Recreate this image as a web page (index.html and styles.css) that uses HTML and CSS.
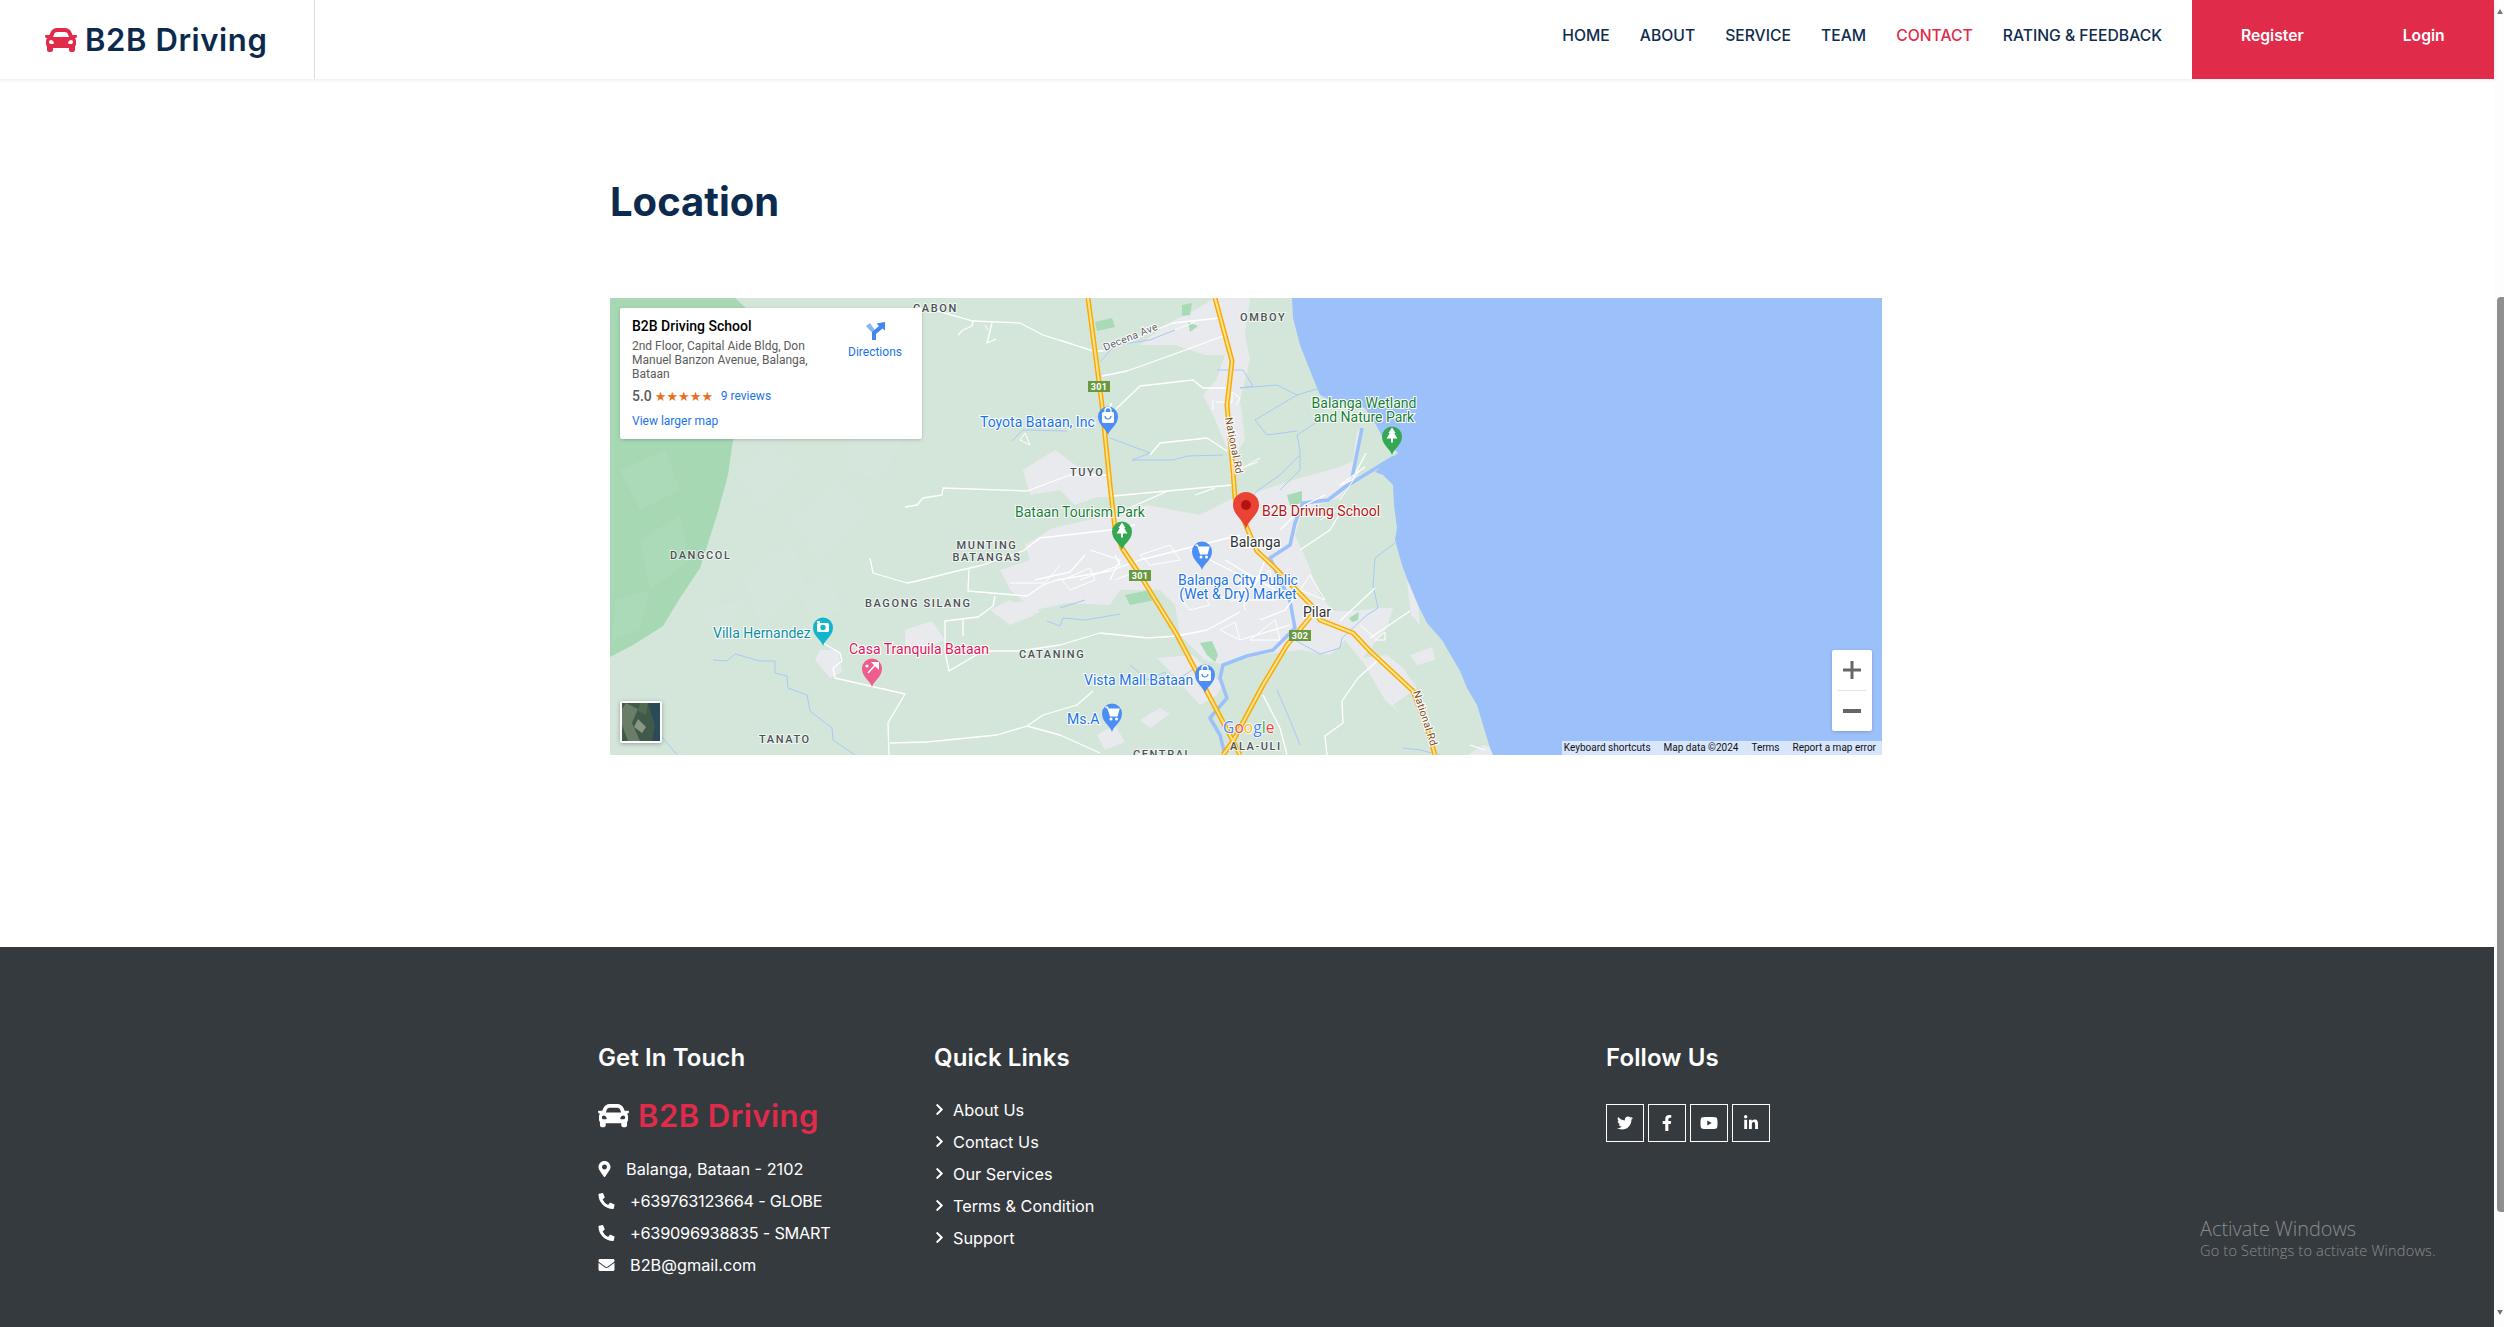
FILE: index.html
```html
<!DOCTYPE html>
<html lang="en">
<head>
<meta charset="utf-8">
<title>B2B Driving - Contact</title>
<link rel="stylesheet" href="styles.css">
</head>
<body>
<svg class="defs" width="0" height="0" aria-hidden="true">
  <defs>
    <symbol id="i-car" viewBox="0 0 512 512"><path d="M499.99 176h-59.87l-16.64-41.6C406.38 91.63 365.57 64 319.5 64h-127c-46.06 0-86.88 27.63-103.99 70.4L71.87 176H12.01C4.2 176-1.53 183.34.37 190.91l6 24C7.7 220.25 12.5 224 18.01 224h20.07C24.65 235.73 16 252.78 16 272v48c0 16.12 6.16 30.67 16 41.93V416c0 17.67 14.33 32 32 32h32c17.67 0 32-14.33 32-32v-32h256v32c0 17.67 14.33 32 32 32h32c17.67 0 32-14.33 32-32v-54.07c9.84-11.25 16-25.8 16-41.93v-48c0-19.22-8.65-36.27-22.07-48H494c5.51 0 10.31-3.75 11.64-9.09l6-24c1.89-7.57-3.84-14.91-11.65-14.91zm-352.06-17.83c7.29-18.22 24.94-30.17 44.57-30.17h127c19.63 0 37.28 11.95 44.57 30.17L384 208H128l19.93-49.83zM96 319.8c-19.2 0-32-12.76-32-31.9S76.8 256 96 256s48 28.71 48 47.85-28.8 15.95-48 15.95zm320 0c-19.2 0-48 3.19-48-15.95S396.8 256 416 256s32 12.76 32 31.9-12.8 31.9-32 31.9z"/></symbol>
    <symbol id="i-marker" viewBox="0 0 384 512"><path d="M172.268 501.67C26.97 291.031 0 269.413 0 192 0 85.961 85.961 0 192 0s192 85.961 192 192c0 77.413-26.97 99.031-172.268 309.67-9.535 13.774-29.93 13.773-39.464 0zM192 272c44.183 0 80-35.817 80-80s-35.817-80-80-80-80 35.817-80 80 35.817 80 80 80z"/></symbol>
    <symbol id="i-phone" viewBox="0 0 512 512"><path d="M497.39 361.8l-112-48a24 24 0 0 0-28 6.9l-49.6 60.6A370.66 370.66 0 0 1 130.6 204.11l60.6-49.6a23.94 23.94 0 0 0 6.9-28l-48-112A24.16 24.16 0 0 0 122.6.61l-104 24A24 24 0 0 0 0 48c0 256.5 207.9 464 464 464a24 24 0 0 0 23.4-18.6l24-104a24.29 24.29 0 0 0-14.01-27.6z"/></symbol>
    <symbol id="i-mail" viewBox="0 0 512 512"><path d="M502.3 190.8c3.9-3.1 9.7-.2 9.7 4.7V400c0 26.5-21.5 48-48 48H48c-26.5 0-48-21.5-48-48V195.6c0-5 5.7-7.8 9.7-4.7 22.4 17.4 52.1 39.5 154.1 113.6 21.1 15.4 56.7 47.8 92.2 47.6 35.7.3 72-32.8 92.3-47.6 102-74.1 131.6-96.3 154-113.7zM256 320c23.2.4 56.6-29.2 73.4-41.4 132.7-96.3 142.8-104.7 173.4-128.7 5.8-4.5 9.2-11.5 9.2-18.9v-19c0-26.5-21.5-48-48-48H48C21.5 64 0 85.5 0 112v19c0 7.4 3.4 14.3 9.2 18.9 30.6 23.9 40.7 32.4 173.4 128.7 16.8 12.2 50.2 41.8 73.4 41.4z"/></symbol>
    <symbol id="i-chev" viewBox="0 0 320 512"><path d="M285.476 272.971L91.132 467.314c-9.373 9.373-24.569 9.373-33.941 0l-22.667-22.667c-9.357-9.357-9.375-24.522-.04-33.901L188.505 256 34.484 101.255c-9.335-9.379-9.317-24.544.04-33.901l22.667-22.667c9.373-9.373 24.569-9.373 33.941 0L285.475 239.03c9.373 9.372 9.373 24.568.001 33.941z"/></symbol>
    <symbol id="i-tw" viewBox="0 0 512 512"><path d="M459.37 151.716c.325 4.548.325 9.097.325 13.645 0 138.72-105.583 298.558-298.558 298.558-59.452 0-114.68-17.219-161.137-47.106 8.447.974 16.568 1.299 25.34 1.299 49.055 0 94.213-16.568 130.274-44.832-46.132-.975-84.792-31.188-98.112-72.772 6.498.974 12.995 1.624 19.818 1.624 9.421 0 18.843-1.3 27.614-3.573-48.081-9.747-84.143-51.98-84.143-102.985v-1.299c13.969 7.797 30.214 12.67 47.431 13.319-28.264-18.843-46.781-51.005-46.781-87.391 0-19.492 5.197-37.36 14.294-52.954 51.655 63.675 129.3 105.258 216.365 109.807-1.624-7.797-2.599-15.918-2.599-24.04 0-57.828 46.782-104.934 104.934-104.934 30.213 0 57.502 12.67 76.67 33.137 23.715-4.548 46.456-13.32 66.599-25.34-7.798 24.366-24.366 44.833-46.132 57.827 21.117-2.273 41.584-8.122 60.426-16.243-14.292 20.791-32.161 39.308-52.628 54.253z"/></symbol>
    <symbol id="i-fb" viewBox="0 0 320 512"><path d="M279.14 288l14.22-92.66h-88.91v-60.13c0-25.35 12.42-50.06 52.24-50.06h40.42V6.26S260.43 0 225.36 0c-73.22 0-121.08 44.38-121.08 124.72v70.62H22.89V288h81.39v224h100.17V288z"/></symbol>
    <symbol id="i-yt" viewBox="0 0 576 512"><path d="M549.655 124.083c-6.281-23.65-24.787-42.276-48.284-48.597C458.781 64 288 64 288 64S117.22 64 74.629 75.486c-23.497 6.322-42.003 24.947-48.284 48.597-11.412 42.867-11.412 132.305-11.412 132.305s0 89.438 11.412 132.305c6.281 23.65 24.787 41.5 48.284 47.821C117.22 448 288 448 288 448s170.78 0 213.371-11.486c23.497-6.321 42.003-24.171 48.284-47.821 11.412-42.867 11.412-132.305 11.412-132.305s0-89.438-11.412-132.305zm-317.51 213.508V175.185l142.739 81.205-142.739 81.201z"/></symbol>
    <symbol id="i-in" viewBox="0 0 448 512"><path d="M100.28 448H7.4V148.9h92.88zM53.79 108.1C24.09 108.1 0 83.5 0 53.8a53.79 53.79 0 0 1 107.58 0c0 29.7-24.1 54.3-53.79 54.3zM447.9 448h-92.68V302.4c0-34.7-.7-79.2-48.29-79.2-48.29 0-55.69 37.7-55.69 76.7V448h-92.78V148.9h89.08v40.8h1.3c12.4-23.5 42.69-48.3 87.88-48.3 94 0 111.28 61.9 111.28 142.3V448z"/></symbol>
    <path id="pin" d="M0 0C-1.6-6-10-10-10-18.500A10 10 0 1 1 10-18.500C10-10 1.600-6 0 0Z"/>
    <path id="g-tree" fill="#fff" d="M0-27.500L-3.600-22H-2.200L-5.400-16.500H-1V-12.500H1V-16.500H5.400L2.200-22H3.600Z"/>
    <g id="g-bag"><rect x="-6" y="-23" width="12" height="11" rx="1.500" fill="#fff"/><path d="M-3-23V-24.500A3 3 0 0 1 3-24.500V-23" fill="none" stroke="#fff" stroke-width="1.300"/><path d="M-3-19A3 3 0 0 0 3-19" fill="none" stroke="#4b8ef5" stroke-width="1.200"/></g>
    <g id="g-cart"><path d="M-7-25H-4.500L-1.500-16H5L7-23H-3.500" fill="#fff" stroke="#fff" stroke-width="1.200"/><circle cx="-1" cy="-13" r="1.500" fill="#fff"/><circle cx="4.500" cy="-13" r="1.500" fill="#fff"/></g>
  </defs>
</svg>

<div class="page">
  <header class="topbar">
    <a class="brand" href="#"><svg class="brand-icon"><use href="#i-car"/></svg><span>B2B Driving</span></a>
    <nav class="nav">
      <a href="#">HOME</a>
      <a href="#">ABOUT</a>
      <a href="#">SERVICE</a>
      <a href="#">TEAM</a>
      <a class="active" href="#">CONTACT</a>
      <a href="#">RATING &amp; FEEDBACK</a>
    </nav>
    <div class="auth">
      <a href="#">Register</a>
      <a class="auth-login" href="#">Login</a>
    </div>
  </header>

  <main class="content">
    <h1 class="title">Location</h1>
    <div class="map">
      <svg class="map-canvas" viewBox="610 298 1272 457" width="1272" height="457">
        <rect class="land" x="610" y="298" width="1272" height="457"/>
        <path class="forest" d="M610 298H735L770 330L733 440L728 475L717 515L700 568L680 598L663 626L633 645L610 657Z"/>
        <g class="terrain">
          <path d="M735 470L770 445L800 470L760 510Z"/><path d="M790 520L840 480L870 510L820 560Z"/><path d="M745 580L790 540L805 580L760 625Z"/><path d="M850 440L905 435L880 480L845 470Z"/><path d="M700 610L745 600L725 640Z"/><path d="M800 590L830 570L840 610L810 620Z"/>
        </g>
        <g class="terrain-dark">
          <path d="M620 470L665 450L680 490L640 510Z"/><path d="M640 540L680 515L690 560L650 590Z"/><path d="M615 600L650 590L640 630L612 640Z"/>
        </g>
        <g class="urban">
          <path d="M1023 470L1055 450L1082 470L1105 475L1115 497L1098 497L1075 505L1060 490L1030 495Z"/>
          <path d="M1140 345L1165 325L1195 310L1215 298L1250 298L1245 335L1250 360L1240 400L1245 440L1232 460L1213 415L1203 395L1216 380L1225 355L1205 355L1175 345Z"/>
          <path d="M1025 545L1053 528L1110 515L1147 505L1200 515L1233 498L1260 491L1300 478L1337 468L1353 461L1357 431L1363 428L1352 478L1340 498L1303 510L1295 535L1307 561L1320 595L1333 611L1353 611L1380 608L1393 608L1387 628L1363 658L1387 655L1403 668L1417 688L1393 705L1400 713L1385 700L1363 662L1345 640L1330 655L1300 650L1260 655L1225 665L1205 660L1180 635L1175 605L1160 590L1120 590L1110 605L1067 603L1035 610L1010 590L1000 570L1030 560Z"/>
          <path d="M1157 658L1193 655L1223 685L1217 695L1200 705L1187 691L1167 668Z"/>
          <path d="M1140 720L1160 708L1170 714L1150 728Z"/>
          <path d="M1097 735L1115 725L1125 742L1105 750Z"/>
          <path d="M905 630L932 621L945 640L920 650L905 645Z"/>
          <path d="M990 610L1010 600L1035 615L1010 625Z"/>
          <path d="M1000 605L1030 600L1040 612L1020 620Z"/>
          <path d="M820 650L838 650L842 672L830 678L815 660Z"/>
          <path d="M1410 655L1432 647L1435 660L1417 665Z"/>
          <path d="M1468 755L1483 745L1495 748L1500 755Z"/>
          <path d="M1407 582L1412 570L1418 600L1420 625L1411 615Z"/>
        </g>
        <g class="park">
          <path d="M1125 595L1150 590L1155 600L1130 605Z"/><path d="M1200 643L1212 641L1218 655L1215 662L1207 655Z"/>
          <path d="M1095 322L1112 318L1115 327L1097 331Z"/><path d="M1182 305L1192 303L1190 315L1182 316Z"/>
          <path d="M1287 495L1302 491L1302 503L1290 506Z"/><path d="M1188 322L1198 326L1190 332Z"/><path d="M1349 618L1359 612L1358 620L1352 622Z"/>
        </g>
        <path class="water" d="M1292 298L1293 318L1300 345L1313 378L1320 395L1335 402L1365 408L1375 423L1383 438L1398 453L1383 465L1375 472L1383 475L1393 485L1394 505L1397 528L1395 540L1402 565L1408 581L1418 605L1427 623L1442 640L1460 671L1467 688L1477 705L1490 748L1493 755H1882V298Z"/>
        <g class="river-thick">
          <path d="M1394 457L1345 487L1328 500L1303 503L1295 523L1290 545L1270 558L1290 601L1295 628L1273 650L1247 656L1223 665L1220 678L1227 698L1210 718L1220 735L1225 755"/>
          <path d="M1362 428L1352 478"/>
        </g>
        <g class="river">
          <path d="M1320 420L1297 435L1300 451L1300 470L1280 490"/>
          <path d="M1395 543L1375 558L1373 585L1378 608L1367 615L1342 638L1340 648L1320 654L1295 640"/>
          <path d="M1217 370H1243L1253 386L1240 388L1277 385L1297 395L1320 388"/>
          <path d="M1297 395L1255 420L1267 435L1297 431"/>
          <path d="M1300 455L1280 475L1257 491L1240 510"/>
          <path d="M1110 438L1150 453L1132 460H1173L1188 456L1223 455"/>
          <path d="M713 660L727 661L735 654L760 661H775V673L787 676L788 688L807 695L810 711L832 728L833 740L855 755"/>
          <path d="M663 738L677 755"/>
          <path d="M1012 441L1023 430L1067 431"/>
          <path d="M1047 621L1060 626L1063 618L1085 620L1120 614"/>
          <path d="M1060 608L1085 600"/>
          <path d="M1130 665L1148 680L1165 672L1170 685L1195 668"/>
          <path d="M1100 362L1115 345L1150 340L1175 330"/>
          <path d="M1277 690L1290 720L1300 745"/>
          <path d="M1403 748L1420 750L1440 755"/>
        </g>
        <g class="road">
          <path d="M938 311L973 321L1020 323L1043 335L1093 351"/>
          <path d="M973 321L972 326L963 330L958 335"/><path d="M992 323L987 343L996 339"/>
          <path d="M905 507L917 505L923 498L942 495L943 488L1027 491L1070 475L1107 475"/>
          <path d="M870 558L873 573L907 583L917 581L957 571L983 565L1023 551L1040 538L1110 530L1135 525"/>
          <path d="M969 568L968 591L1027 596L1043 585L1057 580L1110 571L1140 560L1200 545L1240 535"/>
          <path d="M995 596L993 606L978 617L945 621L945 651L949 671L983 651H1020L1060 645L1100 633L1148 638L1177 636L1207 630L1240 612"/>
          <path d="M963 620L963 636"/>
          <path d="M823 643L840 653L842 661L833 668L835 678L905 694L888 723L889 755"/>
          <path d="M890 743L927 742L997 735L1027 726L1043 715L1077 705L1093 691"/>
          <path d="M1027 726L1060 735L1100 753"/>
          <path d="M1060 340L1093 351H1103L1153 331L1173 323L1220 318"/>
          <path d="M1102 376L1127 371L1172 355L1223 336"/>
          <path d="M1113 496L1232 485"/>
          <path d="M1115 410L1140 386L1193 380L1203 388H1227"/>
          <path d="M1150 455L1160 443L1207 438L1227 451"/>
          <path d="M1375 588L1340 621"/><path d="M1410 611L1370 638"/>
          <path d="M1377 661L1358 678L1342 701L1343 723L1325 736L1327 755"/>
          <path d="M1263 695L1280 728L1287 755"/>
          <path d="M1260 620L1285 610L1300 590M1215 600L1255 585L1265 560M1225 560L1275 590M1240 640L1290 625M1190 550L1240 575L1245 610M1090 550L1120 560L1110 580M1080 580L1120 565L1115 555M1035 580L1070 572L1085 555M1300 550L1330 530L1345 505M1280 530L1305 505L1325 495"/>
          <path d="M1195 495L1215 488M1105 415L1112 403M1125 510L1170 490"/>
          <path d="M1366 453L1352 480L1340 485L1365 467"/>
          <path d="M1470 745L1485 750"/>
        </g>
        <g class="streets">
          <path d="M1216 402H1232V392M1213 410V400M1232 392L1240 398L1236 405M1230 475L1260 458M1236 470L1258 462"/>
          <path d="M1062 580L1090 568L1095 580L1070 590ZM1115 580L1135 572M1140 555L1170 545L1180 560L1150 565ZM1180 598L1200 590L1210 605L1190 610ZM1230 600L1270 570L1275 600ZM1220 630L1235 622L1240 640ZM1250 640L1275 620L1280 640ZM1310 575L1325 600L1300 590ZM1340 500L1360 470M1320 520L1345 505M1360 625L1375 638M1375 640L1385 632V640Z"/>
          <path d="M1010 583H1045L1060 565M1020 440L1025 433L1030 445ZM988 330L985 325M1175 330L1195 322"/>
        </g>
        <g class="hw-base">
          <path d="M1088 298L1095 351L1102 405L1110 485L1115 528L1122 548L1140 575L1177 635L1205 688L1233 741L1240 755"/>
          <path d="M1215 298L1232 361L1227 405L1233 471L1235 498L1247 528L1257 551L1273 566L1312 606L1320 620L1353 633L1370 651L1413 691L1427 728L1435 755"/>
          <path d="M1312 615L1287 645L1263 685L1233 741L1223 755"/>
        </g>
        <g class="hw-top">
          <path d="M1088 298L1095 351L1102 405L1110 485L1115 528L1122 548L1140 575L1177 635L1205 688L1233 741L1240 755"/>
          <path d="M1215 298L1232 361L1227 405L1233 471L1235 498L1247 528L1257 551L1273 566L1312 606L1320 620L1353 633L1370 651L1413 691L1427 728L1435 755"/>
          <path d="M1312 615L1287 645L1263 685L1233 741L1223 755"/>
        </g>
        <g class="shields">
          <rect x="1088" y="381" width="22" height="11"/><rect x="1129" y="570" width="22" height="11"/><rect x="1289" y="630" width="22" height="11"/>
        </g>
        <text class="shield-t" x="1099" y="390">301</text>
        <text class="shield-t" x="1140" y="579">301</text>
        <text class="shield-t" x="1300" y="639">302</text>

        <text class="place" x="913" y="312">CABON</text>
        <text class="place" x="1240" y="321">OMBOY</text>
        <text class="place" x="1070" y="476">TUYO</text>
        <text class="place" x="670" y="559">DANGCOL</text>
        <text class="place mid" x="987" y="549">MUNTING</text>
        <text class="place mid" x="987" y="561">BATANGAS</text>
        <text class="place" x="865" y="607">BAGONG SILANG</text>
        <text class="place" x="1019" y="658">CATANING</text>
        <text class="place" x="759" y="743">TANATO</text>
        <text class="place" x="1230" y="750">ALA-ULI</text>
        <text class="place" x="1133" y="758">CENTRAL</text>
        <text class="city" x="1230" y="547">Balanga</text>
        <text class="city" x="1303" y="617">Pilar</text>
        <text class="road-t" transform="translate(1225 418) rotate(79)">National Rd</text>
        <text class="road-t" transform="translate(1413 692) rotate(72)">National Rd</text>
        <text class="road-g" transform="translate(1105 351) rotate(-22)">Decena Ave</text>

        <text class="poi blue" x="980" y="427">Toyota Bataan, Inc</text>
        <text class="poi green" x="1015" y="517">Bataan Tourism Park</text>
        <text class="poi blue mid" x="1238" y="585">Balanga City Public</text>
        <text class="poi blue mid" x="1238" y="599">(Wet &amp; Dry) Market</text>
        <text class="poi blue" x="1084" y="685">Vista Mall Bataan</text>
        <text class="poi blue" x="1067" y="724">Ms.A</text>
        <text class="poi green mid" x="1364" y="408">Balanga Wetland</text>
        <text class="poi green mid" x="1364" y="422">and Nature Park</text>
        <text class="poi teal" x="713" y="638">Villa Hernandez</text>
        <text class="poi pink" x="849" y="654">Casa Tranquila Bataan</text>
        <text class="poi red" x="1262" y="516">B2B Driving School</text>

        <g transform="translate(1108 435)"><use href="#pin" class="p-blue"/><use href="#g-bag"/></g>
        <g transform="translate(1122 550)"><use href="#pin" class="p-green"/><use href="#g-tree"/></g>
        <g transform="translate(1392 455)"><use href="#pin" class="p-green"/><use href="#g-tree"/></g>
        <g transform="translate(1202 570)"><use href="#pin" class="p-blue"/><use href="#g-cart"/></g>
        <g transform="translate(1205 693)"><use href="#pin" class="p-blue"/><use href="#g-bag"/></g>
        <g transform="translate(1112 732)"><use href="#pin" class="p-blue"/><use href="#g-cart"/></g>
        <g transform="translate(823 646)"><use href="#pin" class="p-teal"/><rect x="-6" y="-23" width="12" height="9" rx="1.500" fill="#fff"/><rect x="-6" y="-25" width="3" height="2" fill="#fff"/><circle cy="-18.500" r="2.700" fill="#12b5cb"/></g>
        <g transform="translate(872 687)"><use href="#pin" class="p-pink"/><path d="M-4-14L5-24" stroke="#fff" stroke-width="1.600" fill="none"/><path d="M-1-25L7-25L7-17Z" fill="#fff"/><circle cx="-5" cy="-21" r="1.600" fill="#fff"/></g>
        <g transform="translate(1246 529)"><path class="p-red" d="M0 0C-2-9-13-14-13-24A13 13 0 1 1 13-24C13-14 2-9 0 0Z"/><circle class="p-red-in" cy="-24" r="5"/></g>

        <text class="google" x="1223" y="733"><tspan class="g-b">G</tspan><tspan class="g-r">o</tspan><tspan class="g-y">o</tspan><tspan class="g-b">g</tspan><tspan class="g-g">l</tspan><tspan class="g-r">e</tspan></text>
      </svg>

      <div class="infocard">
        <div class="info-main">
          <div class="info-name">B2B Driving School</div>
          <div class="info-addr">2nd Floor, Capital Aide Bldg, Don Manuel Banzon Avenue, Balanga, Bataan</div>
          <div class="info-rate"><span class="score">5.0</span><span class="stars">★★★★★</span><a href="#" class="reviews">9 reviews</a></div>
          <a href="#" class="larger">View larger map</a>
        </div>
        <a href="#" class="directions">
          <svg class="dir-icon" viewBox="0 0 19 19"><path fill="#8ab4f8" d="M0 5L4 2L9.500 10V19H6V11.500Z"/><path fill="#4285f4" d="M6 19V11L13 5L10.500 2.500L19 1V9.500L16.500 7.500L10 13V19Z"/></svg>
          <span>Directions</span>
        </a>
      </div>

      <div class="sat">
        <svg viewBox="0 0 38 38" width="38" height="38"><rect width="38" height="38" fill="#3f5a4a"/><path fill="#2b4a58" d="M26 0H38V38H30L33 22Z"/><path fill="#6b7d66" d="M4 0L16 6L10 20L18 38H6L0 22V6Z"/><path fill="#8a9686" d="M16 16L24 24L20 30L12 24Z"/><path fill="#4f6b52" d="M18 0H26L24 12L16 8Z"/></svg>
      </div>

      <div class="zoomctl">
        <button class="zbtn" aria-label="Zoom in"><svg viewBox="0 0 18 18" width="18" height="18"><path d="M7.500 0H10.500V7.500H18V10.500H10.500V18H7.500V10.500H0V7.500H7.500Z"/></svg></button>
        <span class="zsep"></span>
        <button class="zbtn" aria-label="Zoom out"><svg viewBox="0 0 18 18" width="18" height="18"><rect y="7" width="18" height="4"/></svg></button>
      </div>

      <div class="attrib">
        <span>Keyboard shortcuts</span><span>Map data ©2024</span><span>Terms</span><span>Report a map error</span>
      </div>
    </div>
  </main>

  <footer class="footer">
    <section class="fcol">
      <h4 class="fhead">Get In Touch</h4>
      <div class="fbrand"><svg class="fbrand-icon"><use href="#i-car"/></svg><span>B2B Driving</span></div>
      <p class="contact"><svg class="ci ci-pin"><use href="#i-marker"/></svg>Balanga, Bataan - 2102</p>
      <p class="contact phone"><svg class="ci"><use href="#i-phone"/></svg>+639763123664 - GLOBE</p>
      <p class="contact phone"><svg class="ci"><use href="#i-phone"/></svg>+639096938835 - SMART</p>
      <p class="contact"><svg class="ci"><use href="#i-mail"/></svg>B2B@gmail.com</p>
    </section>
    <section class="fcol">
      <h4 class="fhead fhead-links">Quick Links</h4>
      <a class="flink" href="#"><svg class="chev"><use href="#i-chev"/></svg>About Us</a>
      <a class="flink" href="#"><svg class="chev"><use href="#i-chev"/></svg>Contact Us</a>
      <a class="flink" href="#"><svg class="chev"><use href="#i-chev"/></svg>Our Services</a>
      <a class="flink" href="#"><svg class="chev"><use href="#i-chev"/></svg>Terms &amp; Condition</a>
      <a class="flink" href="#"><svg class="chev"><use href="#i-chev"/></svg>Support</a>
    </section>
    <section class="fcol">
      <h4 class="fhead fhead-follow">Follow Us</h4>
      <div class="social">
        <a href="#" aria-label="Twitter"><svg class="s-tw"><use href="#i-tw"/></svg></a>
        <a href="#" aria-label="Facebook"><svg class="s-fb"><use href="#i-fb"/></svg></a>
        <a href="#" aria-label="YouTube"><svg class="s-yt"><use href="#i-yt"/></svg></a>
        <a href="#" aria-label="LinkedIn"><svg class="s-in"><use href="#i-in"/></svg></a>
      </div>
    </section>
    <div class="activate">
      <div class="act-1">Activate Windows</div>
      <div class="act-2">Go to Settings to activate Windows.</div>
    </div>
  </footer>
</div>

<aside class="scrollbar" aria-hidden="true">
  <span class="arrow-up"></span>
  <span class="thumb"></span>
  <span class="arrow-down"></span>
</aside>
</body>
</html>
```
FILE: styles.css
```css
* { box-sizing: border-box; }
html, body { margin: 0; height: 100%; }
body {
  display: flex;
  width: 2504px;
  height: 1327px;
  overflow: hidden;
  background: #fff;
  font-family: Inter, "Liberation Sans", sans-serif;
  color: #fff;
}
a { color: inherit; text-decoration: none; }
.defs { position: absolute; }

.page { flex: 1; min-width: 0; display: flex; flex-direction: column; }

/* top bar */
.topbar {
  flex: none;
  height: 79px;
  display: flex;
  align-items: stretch;
  background: #fff;
  box-shadow: 0 1px 4px rgba(0, 0, 0, .09);
  position: relative;
  z-index: 2;
}
.brand {
  width: 315px;
  padding-left: 45px;
  border-right: 1px solid #dcdcdc;
  display: flex;
  align-items: center;
  gap: 8px;
  color: #0b2a4d;
  font-weight: 600;
  font-size: 31px;
  letter-spacing: .6px;
}
.brand-icon { width: 32px; height: 32px; fill: #e02b4b; flex: none; }
.nav {
  margin-left: auto;
  display: flex;
  gap: 30px;
  align-items: center;
  padding: 0 30px 9px 0;
  color: #0f2c4e;
  font-size: 15.700px;
  font-weight: 500;
}
.nav .active { color: #e02b4b; }
.auth {
  width: 302px;
  display: flex;
  background: #e02b4b;
  color: #fff;
  font-size: 15.700px;
  font-weight: 600;
}
.auth a { flex: none; padding: 26px 47px 0 49px; }
.auth .auth-login { padding-left: 52px; }

/* main */
.content { flex: 1; padding: 0 612px 0 610px; }
.title {
  margin: 0;
  padding-top: 99px;
  height: 219px;
  color: #0b2a4d;
  font-size: 40px;
  line-height: 48px;
  font-weight: 700;
}
.map { position: relative; width: 1272px; height: 457px; overflow: hidden; }
.map-canvas { display: block; font-family: Roboto, sans-serif; }

.land { fill: #d4e6da; }
.forest { fill: #a6d8b3; }
.terrain path { fill: #dcece2; opacity: .22; }
.terrain-dark path { fill: #b4dfc0; opacity: .3; }
.urban path { fill: #e8eaed; }
.park path { fill: #a8dab5; }
.water { fill: #9cc0f9; }
.river-thick path { fill: none; stroke: #9cc0f9; stroke-width: 3.500; stroke-linejoin: round; }
.river path { fill: none; stroke: #a9c9f6; stroke-width: 1; stroke-linejoin: round; }
.road path { fill: none; stroke: #fff; stroke-width: 1.300; stroke-linejoin: round; }
.streets path { fill: none; stroke: #fff; stroke-width: 1; }
.hw-base path { fill: none; stroke: #f9ab00; stroke-width: 5; stroke-linejoin: round; }
.hw-top path { fill: none; stroke: #fde293; stroke-width: 2; stroke-linejoin: round; }
.shields rect { fill: #6a9a3f; }
.shield-t { fill: #fff; font-size: 9px; font-weight: 700; text-anchor: middle; letter-spacing: .3px; }

.place {
  fill: #4d5156;
  font-size: 11px;
  font-weight: 500;
  letter-spacing: 1.600px;
  stroke: #fff;
  stroke-opacity: .7;
  stroke-width: 2px;
  paint-order: stroke;
}
.mid { text-anchor: middle; }
.city {
  fill: #2f3236;
  font-size: 14px;
  font-weight: 400;
  stroke: #fff;
  stroke-width: 2.500px;
  paint-order: stroke;
}
.road-t {
  fill: #7a4e26;
  font-size: 10.500px;
  letter-spacing: .3px;
  stroke: #fff;
  stroke-width: 2px;
  paint-order: stroke;
}
.road-g {
  fill: #5f6368;
  font-size: 10.500px;
  letter-spacing: .3px;
  stroke: #fff;
  stroke-width: 2px;
  paint-order: stroke;
}
.poi {
  font-size: 14px;
  stroke: #fff;
  stroke-width: 2px;
  paint-order: stroke;
}
.blue { fill: #1a73e8; }
.green { fill: #188038; }
.teal { fill: #0b8f9f; }
.pink { fill: #e0175c; }
.red { fill: #b31412; }
.p-blue { fill: #4b8ef5; }
.p-green { fill: #34a853; }
.p-teal { fill: #12b5cb; }
.p-pink { fill: #ee5d8e; }
.p-red { fill: #ea4335; }
.p-red-in { fill: #b31412; }
.google { font-size: 15.500px; font-weight: 500; letter-spacing: .1px; font-family: "Open Sans", sans-serif; stroke: #fff; stroke-width: 1.500px; paint-order: stroke; }
.g-b { fill: #4285f4; }
.g-r { fill: #ea4335; }
.g-y { fill: #fbbc04; }
.g-g { fill: #34a853; }

/* map overlays */
.infocard {
  position: absolute;
  left: 10px;
  top: 10px;
  width: 302px;
  height: 131px;
  padding: 9px 12px 0;
  display: flex;
  justify-content: space-between;
  background: #fff;
  border-radius: 2px;
  box-shadow: 0 1px 4px -1px rgba(0, 0, 0, .3);
  font-family: Roboto, sans-serif;
}
.info-main { width: 195px; }
.info-name { color: #000; font-size: 14px; line-height: 18px; font-weight: 500; }
.info-addr { margin-top: 4px; color: #5b5b5b; font-size: 12px; line-height: 14px; }
.info-rate { margin-top: 5px; display: flex; align-items: center; height: 20px; color: #5b5b5b; }
.score { font-size: 14px; font-weight: 500; margin-right: 3px; }
.stars { color: #e7711b; font-family: "DejaVu Sans", sans-serif; font-size: 13px; letter-spacing: 0; width: 66px; }
.reviews { color: #1a73e8; font-size: 12px; }
.larger { display: block; margin-top: 7px; color: #1a73e8; font-size: 12px; line-height: 16px; }
.directions {
  width: 56px;
  margin-right: 7px;
  display: flex;
  flex-direction: column;
  align-items: center;
  color: #1a73e8;
  font-size: 12px;
  line-height: 16px;
}
.dir-icon { width: 19px; height: 19px; margin: 4px 0 4px; }
.sat {
  position: absolute;
  left: 10px;
  bottom: 12px;
  width: 42px;
  height: 42px;
  border: 2px solid #fff;
  border-radius: 2px;
  box-shadow: 0 1px 4px rgba(0, 0, 0, .3);
}
.sat svg { display: block; }
.zoomctl {
  position: absolute;
  right: 10px;
  bottom: 24px;
  width: 40px;
  height: 81px;
  display: flex;
  flex-direction: column;
  align-items: center;
  background: #fff;
  border-radius: 2px;
  box-shadow: 0 1px 4px -1px rgba(0, 0, 0, .3);
}
.zbtn { flex: 1; width: 100%; padding: 0; border: 0; background: none; display: flex; align-items: center; justify-content: center; }
.zbtn svg { fill: #666; }
.zsep { width: 30px; height: 1px; background: #e6e6e6; }
.attrib {
  position: absolute;
  right: 0;
  bottom: 0;
  width: 320px;
  height: 14px;
  display: flex;
  justify-content: flex-end;
  background: rgba(255, 255, 255, .6);
  color: #111;
  font-family: Roboto, sans-serif;
  font-size: 10px;
  line-height: 14px;
}
.attrib span { padding: 0 6px; white-space: nowrap; }
.attrib span + span { border-left: 1px solid #e6e6e6; }

/* footer */
.footer {
  flex: none;
  height: 380px;
  position: relative;
  display: grid;
  grid-template-columns: 336px 672px 336px;
  padding: 96px 0 0 598px;
  background: #353a3e;
  color: #fff;
  font-size: 16.300px;
}
.fhead { margin: 0 0 23px; font-size: 24px; line-height: 29px; font-weight: 600; letter-spacing: .1px; }
.fhead-links { margin-bottom: 22px; }
.fhead-follow { margin-bottom: 32px; }
.fbrand {
  display: flex;
  align-items: center;
  gap: 9px;
  height: 40px;
  margin: 0 0 18px;
  color: #e02b4b;
  font-size: 31px;
  font-weight: 600;
  letter-spacing: .45px;
}
.fbrand-icon { width: 31px; height: 31px; fill: #fff; flex: none; }
.contact { margin: 0; height: 32px; display: flex; align-items: center; white-space: nowrap; }
.phone { letter-spacing: -.25px; }
.ci { width: 17px; height: 16px; fill: #fff; margin-right: 15px; flex: none; }
.ci-pin { width: 13px; margin-right: 15px; }
.flink { display: flex; align-items: center; height: 32px; }
.chev { width: 9px; height: 13px; fill: #fff; margin: 0 9px 2px 1px; flex: none; }
.social { display: flex; gap: 4px; }
.social a {
  width: 38px;
  height: 38px;
  display: flex;
  align-items: center;
  justify-content: center;
  border: 1px solid #fff;
}
.social svg { fill: #fff; }
.s-tw { width: 16px; height: 16px; }
.s-fb { width: 10px; height: 16px; }
.s-yt { width: 18px; height: 16px; }
.s-in { width: 14px; height: 16px; }
.activate {
  position: absolute;
  left: 2200px;
  top: 268px;
  color: rgba(255, 255, 255, .42);
  font-family: "Open Sans", sans-serif;
  font-weight: 300;
}
.act-1 { font-size: 19.900px; line-height: 27px; }
.act-2 { font-size: 14.500px; line-height: 18px; letter-spacing: .2px; }

/* window scrollbar */
.scrollbar {
  flex: none;
  width: 10px;
  position: relative;
  background: #fdfdfd;
}
.thumb {
  position: absolute;
  left: 3px;
  right: 0;
  top: 297px;
  height: 915px;
  background: #8f8f8f;
  border-radius: 4px 0 0 4px;
}
.arrow-up, .arrow-down {
  position: absolute;
  left: 3px;
  width: 0;
  height: 0;
  border-left: 3.500px solid transparent;
  border-right: 3.500px solid transparent;
}
.arrow-up { top: 9px; border-bottom: 5px solid #777; }
.arrow-down { top: 1310px; border-top: 5px solid #777; }
```
